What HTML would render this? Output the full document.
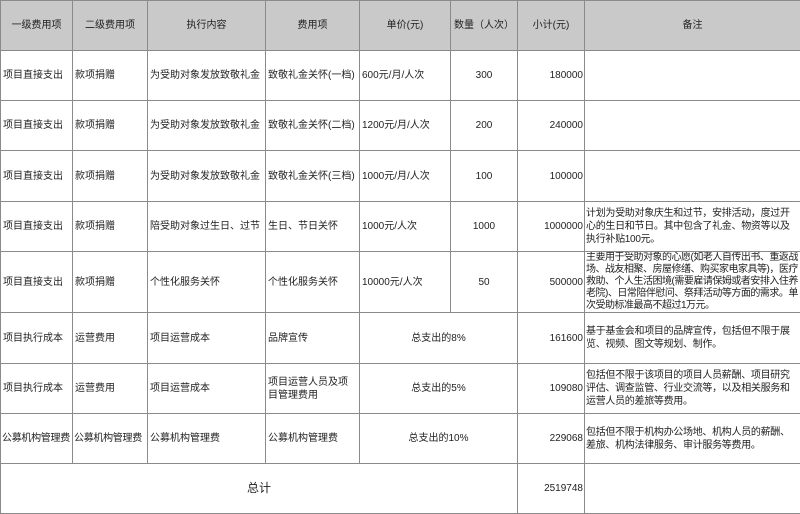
<!DOCTYPE html>
<html><head><meta charset="utf-8"><style>
body{margin:0;background:#fff;}
table{border-collapse:collapse;table-layout:fixed;width:800px;font-family:"Liberation Sans","Noto Sans CJK SC",sans-serif;font-size:10px;color:#222;}
td{border:1px solid #8a8a8a;padding:0 2px;overflow:hidden;line-height:13px;vertical-align:middle;white-space:normal;}
tr.h td{background:#c9c9c9;text-align:center;}
.c{text-align:center}.r{text-align:right;padding-right:1px}
.m{padding:0 1px;letter-spacing:-0.3px}
.nw{white-space:nowrap;padding:0 0 0 1px;letter-spacing:-0.3px}
</style></head><body>
<table>
<colgroup><col style="width:72px"><col style="width:75px"><col style="width:118px"><col style="width:94px"><col style="width:91px"><col style="width:67px"><col style="width:67px"><col style="width:216px"></colgroup>
<tr class="h" style="height:50px"><td>一级费用项</td><td>二级费用项</td><td>执行内容</td><td>费用项</td><td>单价(元)</td><td>数量（人次）</td><td>小计(元)</td><td>备注</td></tr>
<tr style="height:50px"><td>项目直接支出</td><td>款项捐赠</td><td>为受助对象发放致敬礼金</td><td>致敬礼金关怀(一档)</td><td>600元/月/人次</td><td class="c">300</td><td class="r">180000</td><td></td></tr>
<tr style="height:50px"><td>项目直接支出</td><td>款项捐赠</td><td>为受助对象发放致敬礼金</td><td>致敬礼金关怀(二档)</td><td>1200元/月/人次</td><td class="c">200</td><td class="r">240000</td><td></td></tr>
<tr style="height:51px"><td>项目直接支出</td><td>款项捐赠</td><td>为受助对象发放致敬礼金</td><td>致敬礼金关怀(三档)</td><td>1000元/月/人次</td><td class="c">100</td><td class="r">100000</td><td></td></tr>
<tr style="height:50px"><td>项目直接支出</td><td>款项捐赠</td><td>陪受助对象过生日、过节</td><td>生日、节日关怀</td><td>1000元/人次</td><td class="c">1000</td><td class="r">1000000</td><td class="m">计划为受助对象庆生和过节，安排活动，度过开心的生日和节日。其中包含了礼金、物资等以及执行补贴100元。</td></tr>
<tr style="height:61px"><td>项目直接支出</td><td>款项捐赠</td><td>个性化服务关怀</td><td>个性化服务关怀</td><td>10000元/人次</td><td class="c">50</td><td class="r">500000</td><td class="m" style="line-height:12px;letter-spacing:-0.5px">主要用于受助对象的心愿(如老人自传出书、重返战场、战友相聚、房屋修缮、购买家电家具等)，医疗救助、个人生活困境(需要雇请保姆或者安排入住养老院)、日常陪伴慰问、祭拜活动等方面的需求。单次受助标准最高不超过1万元。</td></tr>
<tr style="height:51px"><td>项目执行成本</td><td>运营费用</td><td>项目运营成本</td><td>品牌宣传</td><td colspan="2" class="c">总支出的8%</td><td class="r">161600</td><td class="m">基于基金会和项目的品牌宣传，包括但不限于展览、视频、图文等规划、制作。</td></tr>
<tr style="height:50px"><td>项目执行成本</td><td>运营费用</td><td>项目运营成本</td><td>项目运营人员及项目管理费用</td><td colspan="2" class="c">总支出的5%</td><td class="r">109080</td><td class="m">包括但不限于该项目的项目人员薪酬、项目研究评估、调查监管、行业交流等，以及相关服务和运营人员的差旅等费用。</td></tr>
<tr style="height:50px"><td class="nw">公募机构管理费</td><td class="nw">公募机构管理费</td><td>公募机构管理费</td><td>公募机构管理费</td><td colspan="2" class="c">总支出的10%</td><td class="r">229068</td><td class="m">包括但不限于机构办公场地、机构人员的薪酬、差旅、机构法律服务、审计服务等费用。</td></tr>
<tr style="height:50px"><td colspan="6" class="c" style="font-size:12px">总计</td><td class="r">2519748</td><td></td></tr>
</table>
</body></html>
